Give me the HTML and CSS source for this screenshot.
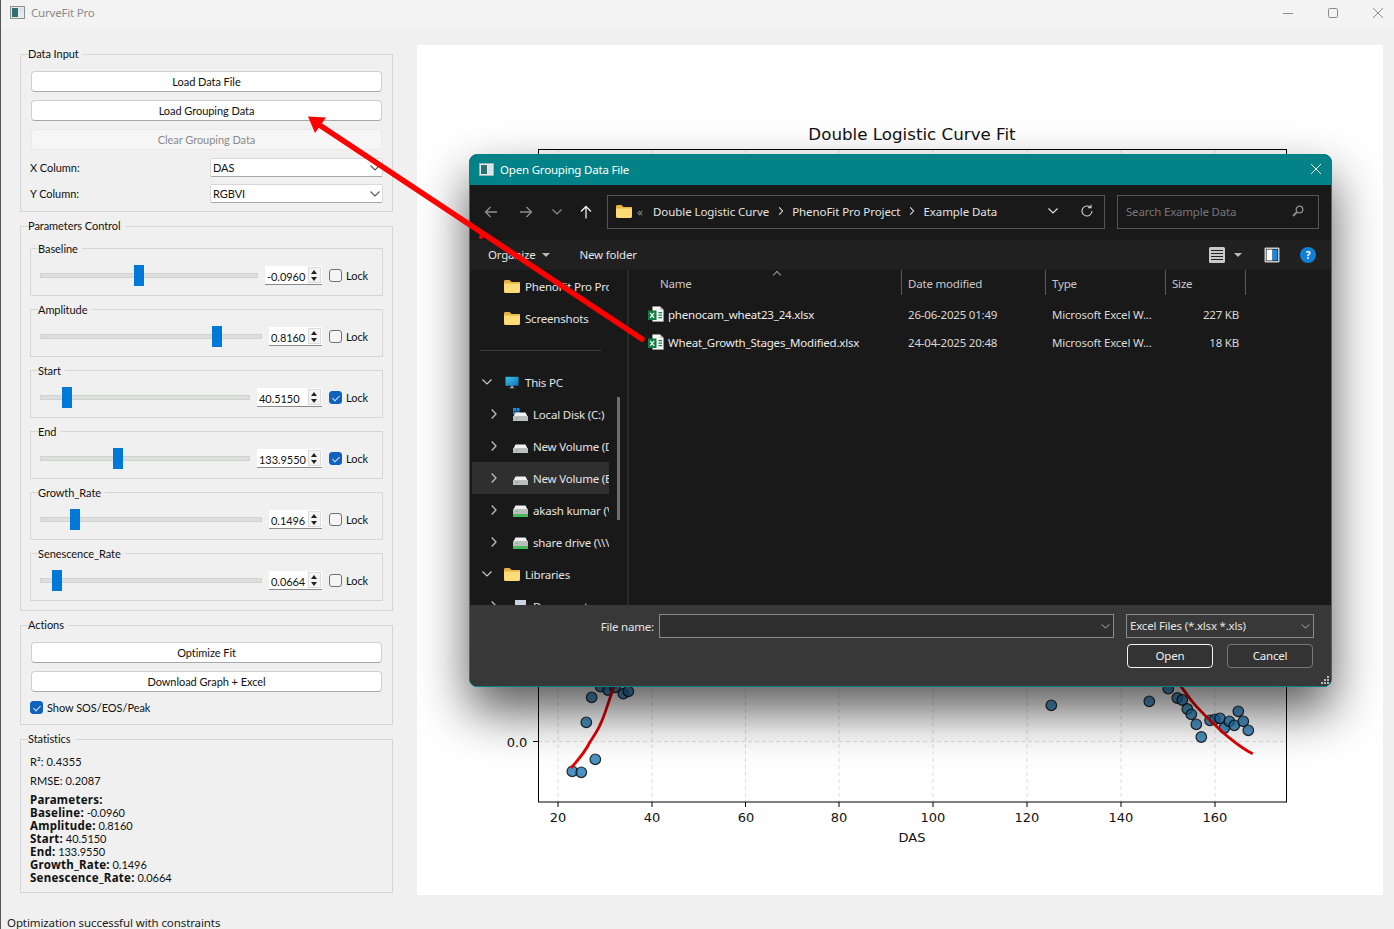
FILE: index.html
```html
<!DOCTYPE html>
<html lang="en">

<head>
    <meta charset="UTF-8">
    <meta name="viewport" content="width=device-width, initial-scale=1.0">
    <title>CurveFit Pro</title>
    <link rel="stylesheet" href="styles.css">
</head>

<body>

    <!-- Shared icons -->
    <svg class="icon-defs" width="0" height="0">
        <symbol id="i-chevron-down" viewBox="0 0 10 6">
            <path d="M.5.5 5 5 9.500.5" fill="none" stroke="currentColor" stroke-width="1.100" />
        </symbol>
        <symbol id="i-chevron-right" viewBox="0 0 6 10">
            <path d="M.7.5 5 5 .7 9.500" fill="none" stroke="currentColor" stroke-width="1.300" />
        </symbol>
        <symbol id="i-folder" viewBox="0 0 16 13">
            <path d="M0 1.500C0 .6.600 0 1.500 0h4L7.500 2H16v3H0z" fill="#e9b43c" />
            <path d="M0 3.500h16v8c0 .9-.6 1.500-1.500 1.500h-13C.6 13 0 12.400 0 11.500z" fill="#fddc78" />
        </symbol>
        <symbol id="i-excel" viewBox="0 0 16 16">
            <path d="M4.500.5h7.500l3.500 3.500v11.500h-11z" fill="#f5f5f5" stroke="#9a9a9a" stroke-width=".6" />
            <path d="M12 .5V4h3.500z" fill="#c9c9c9" />
            <path d="M10.500 6h3.500v1.300h-3.500zM10.500 8.500h3.500v1.300h-3.500zM10.500 11h3.500v1.300h-3.500z" fill="#1e7a48" />
            <rect y="4.500" width="8.500" height="9.500" fill="#107c41" />
            <path d="M2.200 6.800 6.200 11.800M6.200 6.800 2.200 11.800" stroke="#fff" stroke-width="1.200" />
        </symbol>
        <symbol id="i-drive" viewBox="0 0 15 9">
            <path d="M2.500.5h10L14.500 4.500H.5z" fill="#f0f0f0" />
            <rect y="4" width="15" height="5" fill="#bdbdbd" />
            <rect x="3" y="6" width="2" height="1" fill="#38e038" />
        </symbol>
        <symbol id="i-netdrive" viewBox="0 0 16 12">
            <path d="M3 .5h10L15 4.500H1z" fill="#f0f0f0" />
            <rect x=".5" y="4" width="15" height="5" fill="#bdbdbd" />
            <rect x="3.500" y="6" width="2" height="1" fill="#38e038" />
            <rect y="9" width="16" height="3" fill="#46b95a" />
        </symbol>
    </svg>

    <div class="app">

        <!-- Window title bar -->
        <div class="title-bar">
            <svg class="app-icon" width="15" height="13" viewBox="0 0 15 13">
                <rect x=".5" y=".5" width="14" height="12" fill="#e6eaea" stroke="#8b9092" />
                <rect x="2" y="2" width="6" height="9" fill="#2f6f6f" />
                <rect x="9" y="2" width="4" height="4" fill="#d9e3ec" />
            </svg>
            <span class="app-title">CurveFit Pro</span>
            <div class="window-controls">
                <svg width="12" height="12" viewBox="0 0 12 12"><path d="M1 6.500h10" stroke="#8a8a8a" /></svg>
                <svg width="12" height="12" viewBox="0 0 12 12"><rect x="1.500" y="1.500" width="9" height="9" rx="1" fill="none" stroke="#8a8a8a" /></svg>
                <svg width="12" height="12" viewBox="0 0 12 12"><path d="M1 1l10 10M11 1 1 11" stroke="#8a8a8a" /></svg>
            </div>
        </div>

        <div class="main">

            <!-- Left controls -->
            <div class="side-panel">

                <fieldset class="group">
                    <legend>Data Input</legend>
                    <div class="button-stack">
                        <button class="btn">Load Data File</button>
                        <button class="btn">Load Grouping Data</button>
                        <button class="btn btn-disabled">Clear Grouping Data</button>
                    </div>
                    <div class="column-form">
                        <label>X Column:</label>
                        <div class="combo">DAS<svg class="combo-arrow"><use href="#i-chevron-down" /></svg></div>
                        <label>Y Column:</label>
                        <div class="combo">RGBVI<svg class="combo-arrow"><use href="#i-chevron-down" /></svg></div>
                    </div>
                </fieldset>

                <fieldset class="group group-params">
                    <legend>Parameters Control</legend>

                    <fieldset class="param">
                        <legend>Baseline</legend>
                        <div class="param-row">
                            <div class="slider"><span class="thumb" style="left: 43.1%"></span></div>
                            <div class="spin spin-mid">-0.0960<span class="spin-arrows"></span></div>
                            <span class="check"></span><span class="check-label">Lock</span>
                        </div>
                    </fieldset>

                    <fieldset class="param">
                        <legend>Amplitude</legend>
                        <div class="param-row">
                            <div class="slider"><span class="thumb" style="left: 77.5%"></span></div>
                            <div class="spin">0.8160<span class="spin-arrows"></span></div>
                            <span class="check"></span><span class="check-label">Lock</span>
                        </div>
                    </fieldset>

                    <fieldset class="param">
                        <legend>Start</legend>
                        <div class="param-row">
                            <div class="slider"><span class="thumb" style="left: 10.2%"></span></div>
                            <div class="spin spin-wide">40.5150<span class="spin-arrows"></span></div>
                            <span class="check checked"></span><span class="check-label">Lock</span>
                        </div>
                    </fieldset>

                    <fieldset class="param">
                        <legend>End</legend>
                        <div class="param-row">
                            <div class="slider"><span class="thumb" style="left: 34.8%"></span></div>
                            <div class="spin spin-wide">133.9550<span class="spin-arrows"></span></div>
                            <span class="check checked"></span><span class="check-label">Lock</span>
                        </div>
                    </fieldset>

                    <fieldset class="param">
                        <legend>Growth_Rate</legend>
                        <div class="param-row">
                            <div class="slider"><span class="thumb" style="left: 13.1%"></span></div>
                            <div class="spin">0.1496<span class="spin-arrows"></span></div>
                            <span class="check"></span><span class="check-label">Lock</span>
                        </div>
                    </fieldset>

                    <fieldset class="param">
                        <legend>Senescence_Rate</legend>
                        <div class="param-row">
                            <div class="slider"><span class="thumb" style="left: 5%"></span></div>
                            <div class="spin">0.0664<span class="spin-arrows"></span></div>
                            <span class="check"></span><span class="check-label">Lock</span>
                        </div>
                    </fieldset>
                </fieldset>

                <fieldset class="group group-actions">
                    <legend>Actions</legend>
                    <div class="button-stack">
                        <button class="btn">Optimize Fit</button>
                        <button class="btn">Download Graph + Excel</button>
                    </div>
                    <div class="show-markers">
                        <span class="check checked"></span><span class="check-text">Show SOS/EOS/Peak</span>
                    </div>
                </fieldset>

                <fieldset class="group group-stats">
                    <legend>Statistics</legend>
                    <p class="stat">R²: 0.4355</p>
                    <p class="stat">RMSE: 0.2087</p>
                    <div class="stat-params">
                        <b>Parameters:</b><br>
                        <b>Baseline:</b> -0.0960<br>
                        <b>Amplitude:</b> 0.8160<br>
                        <b>Start:</b> 40.5150<br>
                        <b>End:</b> 133.9550<br>
                        <b>Growth_Rate:</b> 0.1496<br>
                        <b>Senescence_Rate:</b> 0.0664
                    </div>
                </fieldset>
            </div>

            <!-- Plot canvas with the file dialog on top -->
            <div class="plot">
                <svg class="chart" width="966" height="850" viewBox="417 45 966 850">
                    <text class="chart-title" x="912" y="140" text-anchor="middle">Double Logistic Curve Fit</text>
                    <g class="grid">
                        <path d="M558 149V802M652 149V802M745.500 149V802M839 149V802M933 149V802M1027 149V802M1121 149V802M1215 149V802M538 741.500H1287" />
                    </g>
                    <g class="points">
                        <circle cx="572.300" cy="771.300" r="5.300" />
                        <circle cx="581.300" cy="772.300" r="5.300" />
                        <circle cx="595.300" cy="759.300" r="5.300" />
                        <circle cx="586.300" cy="722.300" r="5.300" />
                        <circle cx="591.700" cy="697.300" r="5.300" />
                        <circle cx="600.700" cy="686.700" r="5.300" />
                        <circle cx="608" cy="690" r="5.300" />
                        <circle cx="615" cy="687.300" r="5.300" />
                        <circle cx="623.300" cy="693.700" r="5.300" />
                        <circle cx="628.300" cy="691.300" r="5.300" />
                        <circle cx="1051.300" cy="705.300" r="5.300" />
                        <circle cx="1149.300" cy="701.300" r="5.300" />
                        <circle cx="1168.300" cy="688.700" r="5.300" />
                        <circle cx="1177.300" cy="698" r="5.300" />
                        <circle cx="1182.300" cy="700" r="5.300" />
                        <circle cx="1187.300" cy="709" r="5.300" />
                        <circle cx="1191.300" cy="714.300" r="5.300" />
                        <circle cx="1196.300" cy="724.300" r="5.300" />
                        <circle cx="1201.300" cy="737" r="5.300" />
                        <circle cx="1210" cy="720.300" r="5.300" />
                        <circle cx="1215" cy="719.300" r="5.300" />
                        <circle cx="1220" cy="718.300" r="5.300" />
                        <circle cx="1224.300" cy="728" r="5.300" />
                        <circle cx="1229.300" cy="721.300" r="5.300" />
                        <circle cx="1234.300" cy="725.300" r="5.300" />
                        <circle cx="1238.300" cy="711.300" r="5.300" />
                        <circle cx="1243.300" cy="721.300" r="5.300" />
                        <circle cx="1248.300" cy="730.300" r="5.300" />
                    </g>
                    <path class="fit" d="M571 768 C580 758 586 750 590 742 C595 734 598 730 600 725 C604 717 606 710 608.300 703 L616 680" />
                    <path class="fit" d="M1176 680 L1181.700 687.300 C1186 693 1191 701 1196.700 706.700 C1202 712 1207 718 1213.300 723.300 C1219 729 1224 734 1230 738.300 C1237 744 1245 750 1252.700 753.700" />
                    <rect class="axes" x="538.500" y="149.500" width="748" height="652.500" />
                    <path class="axes" d="M558 802v5M652 802v5M745.500 802v5M839 802v5M933 802v5M1027 802v5M1121 802v5M1215 802v5M533 741.500h5" />
                    <g class="tick-labels">
                        <text x="558" y="822">20</text>
                        <text x="652" y="822">40</text>
                        <text x="746" y="822">60</text>
                        <text x="839" y="822">80</text>
                        <text x="933" y="822">100</text>
                        <text x="1027" y="822">120</text>
                        <text x="1121" y="822">140</text>
                        <text x="1215" y="822">160</text>
                        <text x="517" y="747">0.0</text>
                        <text x="912" y="842">DAS</text>
                    </g>
                </svg>

                <div class="dialog">
                    <div class="dialog-title">
                        <svg width="15" height="13" viewBox="0 0 15 13">
                            <rect x=".5" y=".5" width="14" height="12" fill="#e6eaea" stroke="#9fb4b4" />
                            <rect x="2" y="2" width="6" height="9" fill="#2f6f6f" />
                            <rect x="9" y="2" width="4" height="9" fill="#d9e3ec" />
                        </svg>
                        <span class="dialog-name">Open Grouping Data File</span>
                        <svg class="dialog-close" width="12" height="12" viewBox="0 0 12 12"><path d="M1 1l10 10M11 1 1 11" stroke="#fff" /></svg>
                    </div>

                    <div class="dialog-toolbar">
                        <div class="nav-buttons">
                            <svg width="14" height="12" viewBox="0 0 14 12"><path d="M13 6H1.500M6.500 1 1.500 6l5 5" fill="none" stroke="#8f8f8f" stroke-width="1.300" /></svg>
                            <svg width="14" height="12" viewBox="0 0 14 12"><path d="M1 6h11.500M7.500 1l5 5-5 5" fill="none" stroke="#8f8f8f" stroke-width="1.300" /></svg>
                            <svg class="nav-more"><use href="#i-chevron-down" /></svg>
                            <svg width="12" height="14" viewBox="0 0 12 14"><path d="M6 13.500V1.500M1 6.500l5-5 5 5" fill="none" stroke="#f0f0f0" stroke-width="1.300" /></svg>
                        </div>
                        <div class="address-box">
                            <svg class="addr-folder"><use href="#i-folder" /></svg>
                            <span class="crumb-more">«</span>
                            <span class="crumb">Double Logistic Curve</span>
                            <svg class="crumb-sep"><use href="#i-chevron-right" /></svg>
                            <span class="crumb">PhenoFit Pro Project</span>
                            <svg class="crumb-sep"><use href="#i-chevron-right" /></svg>
                            <span class="crumb">Example Data</span>
                            <svg class="addr-drop"><use href="#i-chevron-down" /></svg>
                            <svg class="addr-refresh" width="14" height="14" viewBox="0 0 14 14"><path d="M12 7a5 5 0 1 1-1.600-3.700M11 .8v3h-3" fill="none" stroke="#cfcfcf" stroke-width="1.100" /></svg>
                        </div>
                        <div class="search-box">
                            <span>Search Example Data</span>
                            <svg width="12" height="12" viewBox="0 0 12 12"><circle cx="7.500" cy="4.500" r="3.300" fill="none" stroke="#8d8d8d" stroke-width="1.300" /><path d="M5 7 1 11" stroke="#8d8d8d" stroke-width="1.800" /></svg>
                        </div>
                    </div>

                    <div class="command-bar">
                        <span class="cmd-organize">Organize</span>
                        <span class="caret"></span>
                        <span class="cmd-new">New folder</span>
                        <div class="cmd-right">
                            <svg width="16" height="16" viewBox="0 0 16 16"><rect width="16" height="16" rx="1.500" fill="#c9c9c9" /><path d="M2 3.500h12M2 6.500h12M2 9.500h12M2 12.500h12" stroke="#222" /></svg>
                            <span class="caret caret-view"></span>
                            <svg class="cmd-pane" width="16" height="16" viewBox="0 0 16 16"><rect x=".5" y=".5" width="15" height="15" rx="1" fill="#c9c9c9" /><rect x="2" y="2" width="12" height="12" fill="#111" /><rect x="2.500" y="2.500" width="6" height="11" fill="#fff" /><rect x="8.500" y="2.500" width="5" height="11" fill="#1888e0" /></svg>
                            <span class="help">?</span>
                        </div>
                    </div>

                    <div class="dialog-body">
                        <div class="nav-tree">
                            <div class="tree-row tree-top"><svg class="tree-icon"><use href="#i-folder" /></svg><span>PhenoFit Pro Project</span></div>
                            <div class="tree-row tree-top"><svg class="tree-icon"><use href="#i-folder" /></svg><span>Screenshots</span></div>
                            <div class="tree-divider"></div>
                            <div class="tree-row">
                                <svg class="tree-open"><use href="#i-chevron-down" /></svg>
                                <svg class="tree-icon" viewBox="0 0 16 16"><defs><linearGradient id="screen" x1="0" y1="0" x2="1" y2="1"><stop offset="0" stop-color="#35c4e8" /><stop offset="1" stop-color="#1670b8" /></linearGradient></defs><rect y="1" width="16" height="11" fill="url(#screen)" /><path d="M7 12h2v2h2v1H5v-1h2z" fill="#bbb" /></svg>
                                <span>This PC</span>
                            </div>
                            <div class="tree-row tree-child">
                                <svg class="tree-closed"><use href="#i-chevron-right" /></svg>
                                <svg class="tree-drive" viewBox="0 0 15 13"><rect width="3" height="3" fill="#1b8ae0" /><rect x="3.500" width="3" height="3" fill="#1b8ae0" /><rect y="3.500" width="3" height="3" fill="#1b8ae0" /><rect x="3.500" y="3.500" width="3" height="3" fill="#1b8ae0" /><use href="#i-drive" y="4" width="15" height="9" /></svg>
                                <span>Local Disk (C:)</span>
                            </div>
                            <div class="tree-row tree-child">
                                <svg class="tree-closed"><use href="#i-chevron-right" /></svg>
                                <svg class="tree-drive" viewBox="0 0 15 13"><use href="#i-drive" y="4" width="15" height="9" /></svg>
                                <span>New Volume (D:)</span>
                            </div>
                            <div class="tree-row tree-child tree-selected">
                                <svg class="tree-closed"><use href="#i-chevron-right" /></svg>
                                <svg class="tree-drive" viewBox="0 0 15 13"><use href="#i-drive" y="4" width="15" height="9" /></svg>
                                <span>New Volume (E:)</span>
                            </div>
                            <div class="tree-row tree-child">
                                <svg class="tree-closed"><use href="#i-chevron-right" /></svg>
                                <svg class="tree-drive" viewBox="0 0 15 13"><use href="#i-netdrive" x="-.5" y="1" width="16" height="12" /></svg>
                                <span>akash kumar (\\</span>
                            </div>
                            <div class="tree-row tree-child">
                                <svg class="tree-closed"><use href="#i-chevron-right" /></svg>
                                <svg class="tree-drive" viewBox="0 0 15 13"><use href="#i-netdrive" x="-.5" y="1" width="16" height="12" /></svg>
                                <span>share drive (\\\</span>
                            </div>
                            <div class="tree-row">
                                <svg class="tree-open"><use href="#i-chevron-down" /></svg>
                                <svg class="tree-icon"><use href="#i-folder" /></svg>
                                <span>Libraries</span>
                            </div>
                            <div class="tree-row tree-child">
                                <svg class="tree-closed"><use href="#i-chevron-right" /></svg>
                                <svg class="tree-drive" viewBox="0 0 15 13"><rect x="2" width="11" height="13" fill="#c8d4e4" /></svg>
                                <span>Documents</span>
                            </div>
                            <span class="tree-scroll"></span>
                        </div>

                        <div class="file-list">
                            <div class="file-head">
                                <span class="col-name">Name<i class="sort-mark"></i></span>
                                <span>Date modified</span>
                                <span>Type</span>
                                <span>Size</span>
                            </div>
                            <div class="file-row">
                                <span class="file-name"><svg class="file-icon"><use href="#i-excel" /></svg>phenocam_wheat23_24.xlsx</span>
                                <span>26-06-2025 01:49</span>
                                <span>Microsoft Excel W...</span>
                                <span class="file-size">227 KB</span>
                            </div>
                            <div class="file-row">
                                <span class="file-name"><svg class="file-icon"><use href="#i-excel" /></svg>Wheat_Growth_Stages_Modified.xlsx</span>
                                <span>24-04-2025 20:48</span>
                                <span>Microsoft Excel W...</span>
                                <span class="file-size">18 KB</span>
                            </div>
                        </div>
                    </div>

                    <div class="dialog-footer">
                        <div class="file-inputs">
                            <span class="file-label">File name:</span>
                            <div class="dark-field name-field"><svg class="field-arrow"><use href="#i-chevron-down" /></svg></div>
                            <div class="dark-field type-field">Excel Files (*.xlsx *.xls)<svg class="field-arrow"><use href="#i-chevron-down" /></svg></div>
                        </div>
                        <div class="dialog-actions">
                            <button class="dlg-btn dlg-primary">Open</button>
                            <button class="dlg-btn">Cancel</button>
                        </div>
                        <svg class="grip" width="9" height="9" viewBox="0 0 9 9"><path d="M7 0h2v2H7zM4 3h2v2H4zM7 3h2v2H7zM1 6h2v2H1zM4 6h2v2H4zM7 6h2v2H7z" fill="#bbb" /></svg>
                    </div>
                </div>
            </div>
        </div>

        <div class="status-bar">Optimization successful with constraints</div>

        <!-- Red annotation arrow drawn over the screenshot -->
        <svg class="annotation" width="1394" height="929" viewBox="0 0 1394 929">
            <path d="M642 339 318 124" stroke="#ff0000" stroke-width="5.500" stroke-linecap="round" />
            <path d="M308 116.500 326 117.500 315 133z" fill="#ff0000" />
            <circle cx="481" cy="237" r="2" fill="#ff0000" />
        </svg>
    </div>

</body>

</html>
```

FILE: styles.css
```css
/* Basic reset */
* {
    margin: 0;
    padding: 0;
    box-sizing: border-box;
}

body {
    background-color: #f0f0f0;
    font-family: "Noto Sans", Arial, sans-serif;
    font-size: 11.5px;
    letter-spacing: -0.2px;
    color: #1a1a1a;
    overflow: hidden;
}

button {
    font: inherit;
    letter-spacing: inherit;
}

.icon-defs {
    position: absolute;
}

.app {
    position: relative;
    width: 1394px;
    height: 929px;
    overflow: hidden;
    border-left: 1px solid #555;
}

/* Title bar */
.title-bar {
    display: flex;
    align-items: center;
    height: 27px;
    background-color: #f3f3f3;
    padding: 0 0 2px 9px;
}

.app-title {
    margin-left: 6px;
    color: #8a8a8a;
}

.window-controls {
    display: flex;
    gap: 33px;
    margin-left: auto;
    padding-right: 10px;
}

/* Layout */
.main {
    display: flex;
    height: 868px;
}

.side-panel {
    width: 373px;
    margin-left: 19px;
    padding-top: 20px;
    font-family: Lato, "Noto Sans", sans-serif;
    font-size: 11px;
    letter-spacing: -0.05px;
    color: #111;
}

/* Group boxes */
fieldset {
    border: 1px solid #d6d6d6;
}

legend {
    padding-right: 4px;
    line-height: 14px;
    white-space: nowrap;
}

.group {
    padding: 10px 10px 0;
    height: 165px;
}

.group > legend {
    margin-left: -3px;
}

.group-params {
    height: 392px;
    margin-top: 7px;
    padding: 8px 9px 0;
}

.group-params > legend,
.group-stats > legend {
    margin-left: -2px;
}

.group-actions {
    height: 107px;
    margin-top: 7px;
}

.group-stats {
    height: 161px;
    margin-top: 7px;
    padding: 9px 9px 0;
}

/* Buttons */
.button-stack {
    display: flex;
    flex-direction: column;
    gap: 8px;
}

.btn {
    height: 21px;
    background-color: #fff;
    border: 1px solid #cfcfcf;
    border-bottom-color: #a8a8a8;
    border-radius: 4px;
    color: #111;
}

.btn-disabled {
    background-color: #f6f6f6;
    border-color: #e8e8e8;
    color: #8a8a8a;
}

/* X / Y column form */
.column-form {
    display: grid;
    grid-template-columns: 180px 173px;
    row-gap: 7px;
    margin: 8px -1px 0;
    align-items: center;
}

.combo {
    position: relative;
    height: 19px;
    line-height: 18px;
    padding-left: 2px;
    background-color: #fff;
    border: 1px solid #d8d8d8;
    border-bottom-color: #a8a8a8;
    border-radius: 2px;
}

.combo-arrow {
    position: absolute;
    right: 2px;
    top: 6px;
    width: 10px;
    height: 6px;
    color: #555;
}

/* Parameter boxes */
.param {
    height: 55px;
    margin-bottom: 6px;
    padding: 10px 14px 0 9px;
}

.param > legend {
    position: relative;
    top: 1px;
    margin-left: -2px;
}

.param-row {
    display: flex;
    align-items: center;
    height: 21px;
}

.slider {
    position: relative;
    flex: 1;
    height: 5px;
    margin: 0 7px 1px 0;
    background-color: #dcdfdc;
    border: 1px solid #d2d2d2;
}

.thumb {
    position: absolute;
    top: -9px;
    width: 10px;
    height: 21px;
    background-color: #0078d7;
}

.spin {
    position: relative;
    width: 53px;
    height: 19px;
    line-height: 21px;
    padding-left: 2px;
    background-color: #fff;
    border-bottom: 1px solid #8a8a8a;
}

.spin-mid {
    width: 57px;
}

.spin-wide {
    width: 65px;
}

.spin-arrows {
    position: absolute;
    top: 1px;
    right: 1px;
    width: 13px;
    height: 16px;
    background-color: #f4f4f4;
    border: 1px solid #dadada;
}

.spin-arrows::before,
.spin-arrows::after {
    content: "";
    position: absolute;
    left: 2px;
    border-left: 3.5px solid transparent;
    border-right: 3.5px solid transparent;
}

.spin-arrows::before {
    top: 1.5px;
    border-bottom: 4px solid #222;
}

.spin-arrows::after {
    bottom: 1.5px;
    border-top: 4px solid #222;
}

.check {
    position: relative;
    flex: none;
    width: 13px;
    height: 13px;
    margin-left: 7px;
    background-color: #f5f5f5;
    border: 1px solid #707070;
    border-radius: 3px;
}

.checked {
    background-color: #0f62bd;
    border-color: #0f62bd;
}

.checked::after {
    content: "";
    position: absolute;
    left: 3.500px;
    top: 2px;
    width: 3px;
    height: 6px;
    border: solid #cfe2f7;
    border-width: 0 1px 1px 0;
    transform: rotate(45deg);
}

.check-label {
    flex: none;
    width: 22px;
    margin-left: 4px;
    white-space: nowrap;
}

.check-text {
    margin-left: 4px;
}

.show-markers {
    display: flex;
    align-items: center;
    margin: 9px 0 0 -1px;
}

.show-markers .check {
    margin-left: 0;
}

/* Statistics */
.stat {
    line-height: 14px;
    margin-bottom: 5px;
    letter-spacing: 0.1px;
}

.stat-params {
    margin-top: 5px;
    line-height: 13px;
}

.stat-params b {
    font-family: "Noto Sans", sans-serif;
    font-size: 11.5px;
    letter-spacing: 0.25px;
}

/* Plot */
.plot {
    position: relative;
    width: 966px;
    height: 850px;
    margin: 18px 0 0 24px;
    background-color: #fff;
    overflow: hidden;
}

.chart {
    display: block;
    font-family: "DejaVu Sans", sans-serif;
    letter-spacing: 0;
}

.chart-title {
    font-size: 16.700px;
    fill: #111;
}

.grid path {
    fill: none;
    stroke: #dedede;
    stroke-dasharray: 4 3;
}

.points circle {
    fill: rgba(31, 119, 180, 0.8);
    stroke: rgba(0, 0, 0, 0.8);
    stroke-width: 1.2;
}

.fit {
    fill: none;
    stroke: #e60000;
    stroke-width: 2.800;
}

.axes {
    fill: none;
    stroke: #000;
}

.tick-labels text {
    font-size: 13px;
    text-anchor: middle;
    fill: #111;
}

/* File dialog */
.dialog {
    position: absolute;
    left: 52px;
    top: 109px;
    display: flex;
    flex-direction: column;
    width: 863px;
    height: 533px;
    border: 1px solid #038387;
    border-radius: 8px;
    background-color: #191919;
    box-shadow: 0 24px 50px rgba(0, 0, 0, 0.65);
    overflow: hidden;
    color: #e4e4e4;
}

.dialog-title {
    display: flex;
    align-items: center;
    flex: none;
    height: 30px;
    padding: 0 9px 2px;
    background-color: #038387;
    color: #fff;
}

.dialog-name {
    margin-left: 6px;
}

.dialog-close {
    margin-left: auto;
}

.dialog-toolbar {
    display: flex;
    align-items: center;
    flex: none;
    height: 55px;
    padding: 0 12px 1px 6px;
}

.nav-buttons {
    display: grid;
    grid-template-columns: 30px 40px 22px 36px;
    justify-items: center;
    align-items: center;
    margin-right: 3px;
}

.nav-more {
    width: 10px;
    height: 6px;
    color: #8f8f8f;
}

.address-box {
    display: flex;
    align-items: center;
    width: 498px;
    height: 34px;
    padding: 0 0 2px 8px;
    border: 1px solid #555;
}

.addr-folder {
    width: 16px;
    height: 13px;
}

.crumb-more {
    width: 21px;
    padding-left: 5px;
    color: #8f8f8f;
}

.crumb {
    letter-spacing: -0.07px;
}

.crumb-sep {
    width: 6px;
    height: 8px;
    margin: 0 8.500px;
}

.addr-drop {
    width: 10px;
    height: 6px;
    margin-left: auto;
}

.addr-refresh {
    margin: 0 10px 0 22px;
}

.search-box {
    display: flex;
    align-items: center;
    justify-content: space-between;
    width: 202px;
    height: 34px;
    margin-left: 12px;
    padding: 0 14px 2px 8px;
    border: 1px solid #555;
    color: #767676;
}

.command-bar {
    display: flex;
    align-items: center;
    flex: none;
    height: 30px;
    padding: 0 15px 1px 18px;
    background-color: #202020;
}

.caret {
    width: 0;
    height: 0;
    margin-left: 6px;
    border-left: 4px solid transparent;
    border-right: 4px solid transparent;
    border-top: 4px solid #b8b8b8;
}

.cmd-new {
    margin-left: 30px;
}

.cmd-right {
    display: flex;
    align-items: center;
    margin-left: auto;
}

.caret-view {
    margin: 0 22px 0 9px;
}

.help {
    width: 16px;
    height: 16px;
    margin-left: 20px;
    border-radius: 50%;
    background-color: #0f7fd8;
    color: #fff;
    font-weight: bold;
    font-size: 10px;
    line-height: 16px;
    text-align: center;
}

.dialog-body {
    display: flex;
    flex: 1;
    min-height: 0;
}

.nav-tree {
    position: relative;
    flex: none;
    width: 159px;
    border-right: 2px solid #2b2b2b;
    overflow: hidden;
}

.tree-row {
    display: flex;
    align-items: center;
    width: 137px;
    height: 32px;
    margin-left: 2px;
    padding-left: 10px;
    white-space: nowrap;
    overflow: hidden;
}

.tree-top {
    padding-left: 32px;
}

.tree-child {
    padding-left: 19px;
}

.tree-selected {
    background-color: #2f2f2f;
}

.tree-open {
    flex: none;
    width: 10px;
    height: 6px;
    margin-right: 12px;
    color: #cfcfcf;
}

.tree-closed {
    flex: none;
    width: 6px;
    height: 10px;
    margin-right: 16px;
    color: #bdbdbd;
}

.tree-icon {
    flex: none;
    width: 16px;
    height: 13px;
    margin-right: 5px;
}

.tree-drive {
    flex: none;
    width: 15px;
    height: 13px;
    margin-right: 5px;
}

.tree-divider {
    width: 121px;
    height: 1px;
    margin: 16px 0 15px 10px;
    background-color: #3c3c3c;
}

.tree-scroll {
    position: absolute;
    left: 147px;
    top: 127px;
    width: 3px;
    height: 123px;
    background-color: #6e6e6e;
}

.file-list {
    flex: 1;
    min-width: 0;
}

.file-head,
.file-row {
    display: grid;
    grid-template-columns: 273px 144px 120px 80px;
}

.file-head {
    height: 25px;
    margin-bottom: 5px;
    align-items: center;
    color: #c8c8c8;
}

.file-head span {
    position: relative;
    height: 25px;
    line-height: 28px;
    padding-left: 6px;
    border-right: 1px solid #5a5a5a;
}

.file-head .col-name {
    padding-left: 31px;
}

.sort-mark {
    position: absolute;
    left: 145px;
    top: 2px;
    width: 6px;
    height: 6px;
    border: solid #9a9a9a;
    border-width: 1px 0 0 1px;
    transform: rotate(45deg);
}

.file-row {
    height: 28px;
    align-items: center;
    color: #d8d8d8;
}

.file-row span {
    padding-left: 6px;
}

.file-row .file-name {
    display: flex;
    align-items: center;
    padding-left: 19px;
    color: #ececec;
}

.file-icon {
    width: 16px;
    height: 16px;
    margin-right: 4px;
}

.file-row .file-size {
    padding-right: 7px;
    text-align: right;
}

.dialog-footer {
    position: relative;
    flex: none;
    height: 81px;
    padding: 9px 17px 0 0;
    background-color: #383838;
}

.file-inputs {
    display: flex;
    align-items: center;
    justify-content: flex-end;
}

.file-label {
    margin-right: 5px;
}

.dark-field {
    position: relative;
    height: 24px;
    line-height: 22px;
    padding-left: 3px;
    border: 1px solid #8a8a8a;
    background-color: #2f2f2f;
}

.name-field {
    width: 455px;
    margin-right: 12px;
}

.type-field {
    width: 188px;
    background-color: #383838;
}

.field-arrow {
    position: absolute;
    right: 3px;
    top: 9px;
    width: 9px;
    height: 5px;
    color: #bbb;
}

.dialog-actions {
    display: flex;
    justify-content: flex-end;
    gap: 14px;
    margin: 6px 1px 0 0;
}

.dlg-btn {
    width: 86px;
    height: 24px;
    padding-bottom: 2px;
    background-color: #333;
    border: 1px solid #777;
    border-radius: 4px;
    color: #f0f0f0;
}

.dlg-primary {
    border-color: #f0f0f0;
}

.grip {
    position: absolute;
    right: 2px;
    bottom: 1px;
}

/* Status bar */
.status-bar {
    height: 34px;
    padding: 21px 0 0 6px;
    line-height: 14px;
    letter-spacing: -0.1px;
}

/* Annotation */
.annotation {
    position: absolute;
    left: -1px;
    top: 0;
    pointer-events: none;
}
```
